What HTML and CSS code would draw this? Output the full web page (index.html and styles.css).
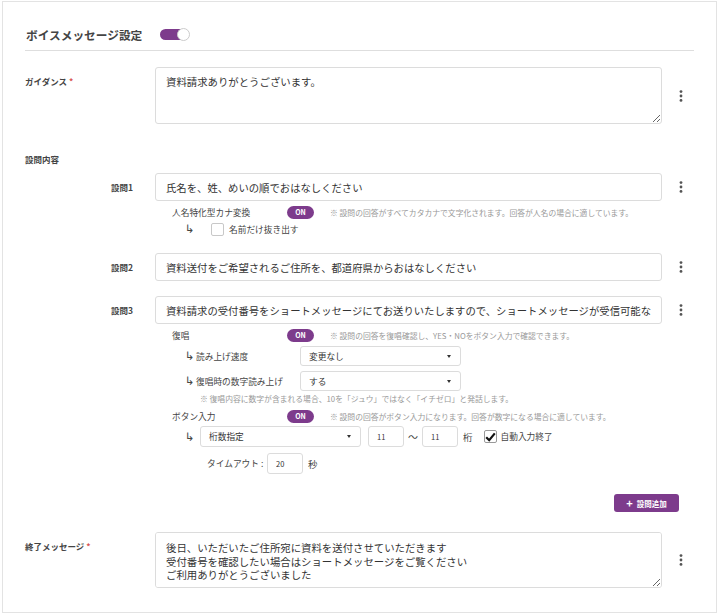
FILE: index.html
```html
<!DOCTYPE html>
<html lang="ja">
<head>
<meta charset="utf-8">
<title>ボイスメッセージ設定</title>
<link rel="stylesheet" href="styles.css">
</head>
<body>
<div class="card">
	<div class="card-head">
		<h2 class="card-title">ボイスメッセージ設定</h2>
		<span class="switch"><span class="knob"></span></span>
	</div>

	<!-- guidance -->
	<div class="row guide-row">
		<div class="label">ガイダンス<span class="req">*</span></div>
		<textarea class="area">資料請求ありがとうございます。</textarea>
		<div class="more"><svg width="4" height="12" viewBox="0 0 4 12"><circle cx="2" cy="1.6" r="1.4"/><circle cx="2" cy="6" r="1.4"/><circle cx="2" cy="10.4" r="1.4"/></svg></div>
	</div>

	<div class="label section-label">設問内容</div>

	<!-- question 1 -->
	<div class="row q-row q-first">
		<div class="qlabel">設問1</div>
		<input class="text" type="text" value="氏名を、姓、めいの順でおはなしください">
		<div class="more"><svg width="4" height="12" viewBox="0 0 4 12"><circle cx="2" cy="1.6" r="1.4"/><circle cx="2" cy="6" r="1.4"/><circle cx="2" cy="10.4" r="1.4"/></svg></div>
	</div>
	<div class="opts">
		<div class="opt">
			<span class="opt-name">人名特化型カナ変換</span>
			<span class="pill">ON</span>
			<span class="note">※ 設問の回答がすべてカタカナで文字化されます。回答が人名の場合に適しています。</span>
		</div>
		<div class="sub sub-check">
			<span class="hook">↳</span>
			<span class="check"></span>
			<span class="sub-text">名前だけ抜き出す</span>
		</div>
	</div>

	<!-- question 2 -->
	<div class="row q-row q-second">
		<div class="qlabel">設問2</div>
		<input class="text" type="text" value="資料送付をご希望されるご住所を、都道府県からおはなしください">
		<div class="more"><svg width="4" height="12" viewBox="0 0 4 12"><circle cx="2" cy="1.6" r="1.4"/><circle cx="2" cy="6" r="1.4"/><circle cx="2" cy="10.4" r="1.4"/></svg></div>
	</div>

	<!-- question 3 -->
	<div class="row q-row q-third">
		<div class="qlabel">設問3</div>
		<input class="text" type="text" value="資料請求の受付番号をショートメッセージにてお送りいたしますので、ショートメッセージが受信可能な1">
		<div class="more"><svg width="4" height="12" viewBox="0 0 4 12"><circle cx="2" cy="1.6" r="1.4"/><circle cx="2" cy="6" r="1.4"/><circle cx="2" cy="10.4" r="1.4"/></svg></div>
	</div>
	<div class="opts">
		<div class="opt">
			<span class="opt-name">復唱</span>
			<span class="pill">ON</span>
			<span class="note">※ 設問の回答を復唱確認し、YES・NOをボタン入力で確認できます。</span>
		</div>
		<div class="sub sub-select first-select">
			<span class="hook">↳</span>
			<span class="sub-name">読み上げ速度</span>
			<div class="select wide"><span>変更なし</span><i class="caret"></i></div>
		</div>
		<div class="sub sub-select">
			<span class="hook">↳</span>
			<span class="sub-name">復唱時の数字読み上げ</span>
			<div class="select wide"><span>する</span><i class="caret"></i></div>
		</div>
		<div class="note note-line">※ 復唱内容に数字が含まれる場合、10を「ジュウ」ではなく「イチゼロ」と発話します。</div>

		<div class="opt opt-button">
			<span class="opt-name">ボタン入力</span>
			<span class="pill">ON</span>
			<span class="note">※ 設問の回答がボタン入力になります。回答が数字になる場合に適しています。</span>
		</div>
		<div class="sub sub-digits">
			<span class="hook">↳</span>
			<div class="select digits"><span>桁数指定</span><i class="caret"></i></div>
			<input class="small" type="text" value="11">
			<span class="tilde">～</span>
			<input class="small" type="text" value="11">
			<span class="unit">桁</span>
			<span class="check checked"><svg width="11" height="10" viewBox="0 0 11 10"><path d="M1.2 5.2 L4.2 8.2 L9.8 1.4" fill="none" stroke="#111" stroke-width="2.2"/></svg></span>
			<span class="sub-text">自動入力終了</span>
		</div>
		<div class="timeout">
			<span class="timeout-label">タイムアウト :</span>
			<input class="small" type="text" value="20">
			<span class="unit">秒</span>
		</div>
	</div>

	<div class="add-row">
		<button class="add-btn"><span class="plus">+</span>設問追加</button>
	</div>

	<!-- end message -->
	<div class="row end-row">
		<div class="label">終了メッセージ<span class="req">*</span></div>
		<textarea class="area">後日、いただいたご住所宛に資料を送付させていただきます
受付番号を確認したい場合はショートメッセージをご覧ください
ご利用ありがとうございました</textarea>
		<div class="more"><svg width="4" height="12" viewBox="0 0 4 12"><circle cx="2" cy="1.6" r="1.4"/><circle cx="2" cy="6" r="1.4"/><circle cx="2" cy="10.4" r="1.4"/></svg></div>
	</div>
</div>
</body>
</html>
```

FILE: styles.css
```css
body {
	margin: 0;
	background: #fff;
	color: #333;
	font-family: "Noto Sans CJK JP", "Noto Sans", sans-serif;
}

.card {
	margin: 1px 4px 0 2px;
	height: 612px;
	border: 1px solid #e3e3e3;
	padding: 0 22px 0 22px;
	box-sizing: border-box;
}

.card-head {
	display: flex;
	align-items: center;
	height: 49px;
	padding-top: 17px;
	box-sizing: border-box;
	border-bottom: 1px solid #dedede;
}

.card-title {
	margin: 0 0 0 1px;
	font-size: 11.7px;
	font-weight: bold;
	color: #444;
}

.switch {
	position: relative;
	display: inline-block;
	width: 29px;
	height: 11px;
	margin-left: 18px;
	border-radius: 6px;
	background: #7d3b8c;
}

.knob {
	position: absolute;
	right: -1px;
	top: -1px;
	width: 11px;
	height: 11px;
	border-radius: 50%;
	background: #fff;
	border: 1px solid #ccc;
}

.row {
	display: flex;
	align-items: flex-start;
}

.row > * {
	flex-shrink: 0;
}

.label {
	width: 130px;
	font-size: 8.5px;
	font-weight: bold;
	color: #444;
	line-height: 12px;
	padding-top: 8px;
}

.req {
	color: #d9534f;
	margin-left: 2px;
}

.area {
	width: 507px;
	height: 57px;
	box-sizing: border-box;
	margin: 0;
	padding: 7px 10px;
	border: 1px solid #dcdcdc;
	border-radius: 3px;
	font-family: inherit;
	font-size: 10.4px;
	line-height: 13.5px;
	color: #333;
}

.more {
	width: 38px;
	align-self: center;
	display: flex;
	justify-content: center;
}

.more svg {
	fill: #555;
}

.guide-row {
	margin-top: 16px;
}

.section-label {
	margin-top: 21px;
}

.q-row {
	align-items: center;
}

.q-first {
	margin-top: 8px;
}

.q-second {
	margin-top: 16px;
}

.q-third {
	margin-top: 15px;
}

.qlabel {
	width: 108px;
	padding-right: 22px;
	text-align: right;
	font-size: 8.5px;
	font-weight: bold;
	color: #444;
}

.text {
	width: 507px;
	height: 28px;
	box-sizing: border-box;
	margin: 0;
	padding: 0 10px;
	border: 1px solid #dcdcdc;
	border-radius: 3px;
	font-family: inherit;
	font-size: 10.35px;
	color: #333;
}

.opts {
	margin-left: 147px;
	font-size: 8.7px;
	color: #444;
}

.opt {
	display: flex;
	align-items: center;
	height: 16px;
	margin-top: 3px;
}

.opt-name {
	width: 115px;
}

.pill {
	width: 27px;
	height: 13px;
	line-height: 13px;
	border-radius: 7px;
	background: #7d3b8c;
	color: #fff;
	font-size: 7px;
	font-weight: bold;
	text-align: center;
}

.note {
	margin-left: 16px;
	font-size: 7.8px;
	color: #999;
	white-space: nowrap;
}

.note-line {
	margin: 1px 0 0 28px;
	height: 14px;
	line-height: 14px;
}

.sub {
	display: flex;
	align-items: center;
	padding-left: 13px;
}

.sub > * {
	flex-shrink: 0;
}

.hook {
	width: 15px;
	font-family: "DejaVu Sans", sans-serif;
	font-size: 11.5px;
	color: #444;
	line-height: 12px;
}

.sub-check {
	height: 16px;
	margin-top: 1px;
}

.sub-check .hook {
	width: 26px;
}

.check {
	display: flex;
	align-items: center;
	justify-content: center;
	width: 11px;
	height: 11px;
	border: 1px solid #c8c8c8;
	border-radius: 2px;
	background: #fff;
}

.check.checked {
	border-color: #999;
}

.sub-text {
	margin-left: 5px;
	white-space: nowrap;
}

.sub-select {
	height: 20px;
	margin-top: 5px;
}

.first-select {
	margin-top: 3px;
}

.sub-select .hook {
	width: 11px;
}

.sub-name {
	width: 104px;
	white-space: nowrap;
}

.select {
	display: flex;
	align-items: center;
	justify-content: space-between;
	box-sizing: border-box;
	padding: 0 9px 0 8px;
	border: 1px solid #dcdcdc;
	border-radius: 3px;
	background: #fff;
	color: #333;
}

.select.wide {
	width: 161px;
	height: 20px;
}

.select.digits {
	width: 161px;
	height: 21px;
}

.caret {
	width: 0;
	height: 0;
	border-left: 2.5px solid transparent;
	border-right: 2.5px solid transparent;
	border-top: 3px solid #333;
}

.opt-button {
	margin-top: 2px;
}

.sub-digits {
	margin-top: 2px;
	height: 21px;
}

.small {
	width: 36px;
	height: 21px;
	box-sizing: border-box;
	margin: 0;
	padding: 0 8px;
	border: 1px solid #dcdcdc;
	border-radius: 3px;
	font-family: inherit;
	font-size: 7.5px;
	color: #333;
}

.sub-digits .small {
	margin-left: 7px;
}

.sub-digits .tilde + .small {
	margin-left: 4px;
}

.tilde {
	margin-left: 4px;
	font-size: 10px;
}

.unit {
	margin-left: 5px;
	font-size: 9.5px;
}

.sub-digits .check {
	margin-left: 11px;
}

.sub-digits .sub-text {
	margin-left: 4px;
}

.timeout {
	display: flex;
	align-items: center;
	margin: 6px 0 0 35px;
	height: 21px;
}

.timeout-label {
	width: 60px;
	white-space: nowrap;
}

.add-row {
	display: flex;
	justify-content: flex-end;
	margin: 20px 15px 0 0;
}

.add-btn {
	display: flex;
	align-items: center;
	height: 18px;
	width: 65px;
	justify-content: center;
	padding: 0;
	border: none;
	border-radius: 3px;
	background: #7d3b8c;
	color: #fff;
	font-family: inherit;
	font-size: 7.5px;
	font-weight: bold;
}

.plus {
	font-size: 11px;
	margin-right: 4px;
	line-height: 10px;
}

.end-row {
	margin-top: 20px;
}

.end-row .area {
	height: 56px;
	padding-top: 8px;
}
```
